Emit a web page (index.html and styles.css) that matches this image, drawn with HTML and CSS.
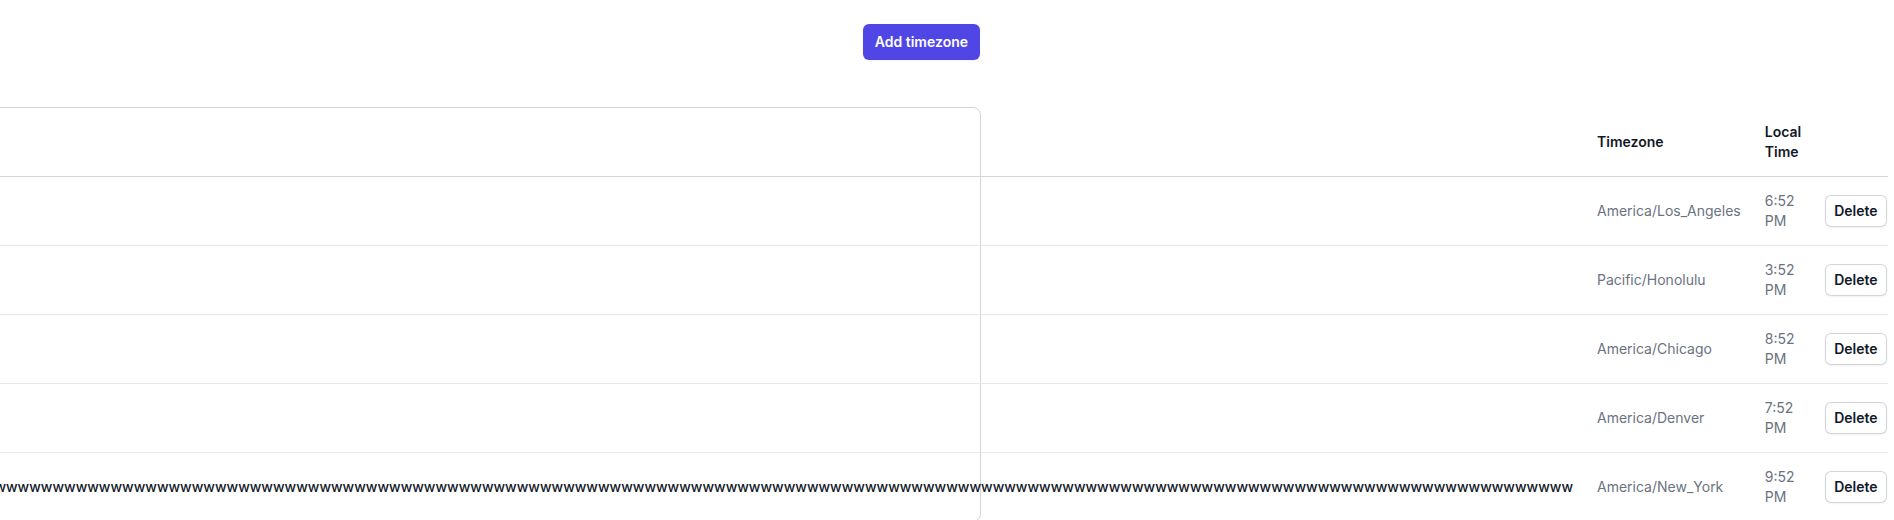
FILE: index.html
```html
<!DOCTYPE html>
<html lang="en">
<head>
<meta charset="utf-8">
<title>Timezones</title>
<link rel="stylesheet" href="styles.css">
</head>
<body>
<div class="wrap">
  <div class="toolbar">
    <button class="btn-primary" type="button">Add timezone</button>
  </div>
  <div class="card">
    <table class="tz-table">
      <thead>
        <tr>
          <th class="col-name"><div class="name">Name</div></th>
          <th>Timezone</th>
          <th>Local Time</th>
          <th class="col-action"></th>
        </tr>
      </thead>
      <tbody>
        <tr>
          <td class="col-name"><div class="name"></div></td>
          <td class="tz">America/Los_Angeles</td>
          <td>6:52 PM</td>
          <td class="col-action"><button class="btn-secondary" type="button">Delete</button></td>
        </tr>
        <tr>
          <td class="col-name"><div class="name"></div></td>
          <td class="tz">Pacific/Honolulu</td>
          <td>3:52 PM</td>
          <td class="col-action"><button class="btn-secondary" type="button">Delete</button></td>
        </tr>
        <tr>
          <td class="col-name"><div class="name"></div></td>
          <td class="tz">America/Chicago</td>
          <td>8:52 PM</td>
          <td class="col-action"><button class="btn-secondary" type="button">Delete</button></td>
        </tr>
        <tr>
          <td class="col-name"><div class="name"></div></td>
          <td class="tz">America/Denver</td>
          <td>7:52 PM</td>
          <td class="col-action"><button class="btn-secondary" type="button">Delete</button></td>
        </tr>
        <tr>
          <td class="col-name"><div class="name name-end"><span>wwwwwwwwwwwwwwwwwwwwwwwwwwwwwwwwwwwwwwwwwwwwwwwwwwwwwwwwwwwwwwwwwwwwwwwwwwwwwwwwwwwwwwwwwwwwwwwwwwwwwwwwwwwwwwwwwwwwwwwwwwwwwwwwwwwwwwwwwwwwwwwwwwwwwwwwwwwwwwwwwwwwwwwwwwwwwwwwwwwwwwwwwwwwwwwwwwwwwwwwwwwwwwwwwwwwwwwwwwwwwwwwwwwwwwwwwwwwwwwwwwwwwwwwww</span></div></td>
          <td class="tz">America/New_York</td>
          <td>9:52 PM</td>
          <td class="col-action"><button class="btn-secondary" type="button">Delete</button></td>
        </tr>
      </tbody>
    </table>
  </div>
</div>
</body>
</html>
```
FILE: styles.css
```css
html {
  overflow: hidden;
}
body {
  margin: 0;
  font-family: Inter, "Noto Sans", "Liberation Sans", sans-serif;
  font-size: 14px;
  line-height: 20px;
  color: #111827;
  background: #ffffff;
}
.wrap {
  width: 981px;
  display: flex;
  flex-direction: column;
  align-items: flex-end;
  padding-top: 24px;
}
.toolbar {
  display: flex;
  justify-content: flex-end;
  padding-right: 1px;
}
.btn-primary {
  font-family: inherit;
  font-size: 14px;
  line-height: 20px;
  font-weight: 600;
  color: #ffffff;
  background: #4f46e5;
  border: 0;
  border-radius: 6px;
  padding: 8px 12px;
  box-shadow: 0 1px 2px rgba(0, 0, 0, 0.05);
}
.card {
  width: 1200px;
  flex-shrink: 0;
  margin-top: 47px;
  border: 1px solid #d1d5db;
  border-radius: 8px;
}
.tz-table {
  width: 100%;
  border-collapse: collapse;
  text-align: left;
}
.tz-table th {
  padding: 14px 12px;
  font-size: 14px;
  line-height: 20px;
  font-weight: 600;
  color: #111827;
  vertical-align: middle;
}
.tz-table thead tr {
  border-bottom: 1px solid #d1d5db;
}
.tz-table tbody tr + tr {
  border-top: 1px solid #e5e7eb;
}
.tz-table td {
  padding: 14px 12px;
  color: #6b7280;
  vertical-align: middle;
}
.tz-table .col-name {
  padding-left: 24px;
  white-space: nowrap;
  font-weight: 500;
  color: #111827;
}
.name {
  width: 1769px;
  overflow: hidden;
}
.name-end {
  display: flex;
  justify-content: flex-end;
}
.name-end span {
  flex-shrink: 0;
}
.tz-table .tz {
  white-space: nowrap;
}
.tz-table .col-action {
  padding-right: 1px;
  white-space: nowrap;
}
.btn-secondary {
  font-family: inherit;
  font-size: 14px;
  line-height: 20px;
  font-weight: 600;
  color: #111827;
  background: #ffffff;
  border: 0;
  border-radius: 6px;
  padding: 6px 9px;
  box-shadow: inset 0 0 0 1px #d1d5db, 0 1px 2px rgba(0, 0, 0, 0.05);
}
```
